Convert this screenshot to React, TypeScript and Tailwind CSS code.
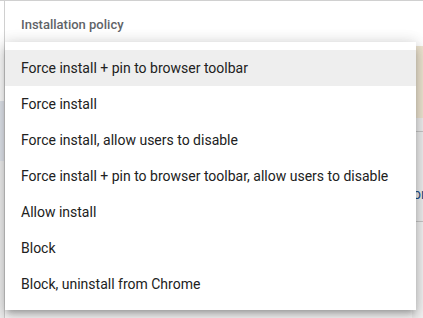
const options = [
  'Force install + pin to browser toolbar',
  'Force install',
  'Force install, allow users to disable',
  'Force install + pin to browser toolbar, allow users to disable',
  'Allow install',
  'Block',
  'Block, uninstall from Chrome',
];

export default function App() {
  return (
    <div className="relative w-[423px] h-[318px] overflow-hidden bg-white font-['Roboto',sans-serif]">
      {/* underlying page */}
      <div className="flex h-full border-t border-[#d0d0d0]">
        <div className="flex w-[4px] flex-col">
          <div className="h-[100px] bg-white" />
          <div className="h-[60px] bg-[#e3e7ee]" />
          <div className="flex-1 bg-[#f1f1f1]" />
        </div>
        <div className="flex flex-1 flex-col border-l border-[#d0d0d0]">
          <div className="flex h-[45px] items-center pl-[16px] pt-[2px]">
            <span className="text-[13px] font-medium text-[#5f6368]">Installation policy</span>
          </div>
          <div className="flex flex-1 justify-end">
            <div className="flex w-[11px] flex-col">
              <div className="h-[72px] bg-[#efe6d2]" />
              <div className="h-[14px] border-b border-[#c8c8c8] bg-[#efefef]" />
              <div className="flex h-[90px] items-end border-b border-[#c8c8c8] bg-[#efefef] pb-[20px]">
                <span className="pl-[1px] text-[14px] leading-none text-[#1a4f8a]">or</span>
              </div>
              <div className="flex-1 bg-[#f3f3f3]" />
            </div>
          </div>
        </div>
      </div>

      {/* dropdown menu */}
      <div className="absolute left-[5px] top-[42px] w-[411px] bg-white py-[8px] shadow-[0_5px_5px_-3px_rgba(0,0,0,0.2),0_8px_10px_1px_rgba(0,0,0,0.14),0_3px_14px_2px_rgba(0,0,0,0.12),0_-2px_14px_rgba(0,0,0,0.06)]">
        {options.map((opt, i) => (
          <div
            key={i}
            className={`flex h-[36px] items-center px-[16px] text-[14px] text-[#212121] ${i === 0 ? 'bg-[#eeeeee]' : ''}`}
          >
            {opt}
          </div>
        ))}
      </div>
    </div>
  );
}
